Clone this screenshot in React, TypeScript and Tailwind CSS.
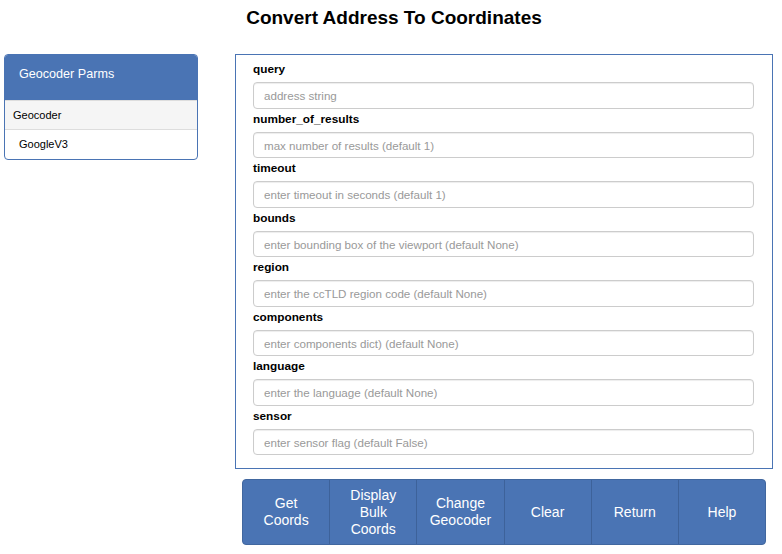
import React from 'react';

const fields: { name: string; placeholder: string }[] = [
  { name: 'query', placeholder: 'address string' },
  { name: 'number_of_results', placeholder: 'max number of results (default 1)' },
  { name: 'timeout', placeholder: 'enter timeout in seconds (default 1)' },
  { name: 'bounds', placeholder: 'enter bounding box of the viewport (default None)' },
  { name: 'region', placeholder: 'enter the ccTLD region code (default None)' },
  { name: 'components', placeholder: 'enter components dict) (default None)' },
  { name: 'language', placeholder: 'enter the language (default None)' },
  { name: 'sensor', placeholder: 'enter sensor flag (default False)' },
];

const buttons: string[][] = [
  ['Get', 'Coords'],
  ['Display', 'Bulk', 'Coords'],
  ['Change', 'Geocoder'],
  ['Clear'],
  ['Return'],
  ['Help'],
];

function GeocoderPanel() {
  return (
    <div className="ml-[4px] w-[194px] h-[106px] border border-[#4a74b4] rounded-[4px] overflow-hidden">
      <div className="h-[45px] bg-[#4a74b4] pl-[14px] pt-[10px] text-white text-[12.6px] leading-[18px]">
        Geocoder Parms
      </div>
      <div className="h-[30px] bg-[#f5f5f5] border-y border-[#dddddd] pl-[8px] text-[11px] leading-[28px] text-black">
        Geocoder
      </div>
      <div className="h-[29px] pl-[14px] text-[11px] leading-[28px] text-black">GoogleV3</div>
    </div>
  );
}

function ParmField({ name, placeholder }: { name: string; placeholder: string }) {
  return (
    <div className="h-[49.5px]">
      <label className="block h-[20px] text-[11.8px] leading-[20px] font-bold text-black">{name}</label>
      <input
        type="text"
        placeholder={placeholder}
        className="mt-[3px] block w-full h-[26.5px] px-[10px] pt-[1px] border border-[#cccccc] rounded-[4px] bg-white text-[11.6px] text-black placeholder:text-[#999999] shadow-[inset_0_1px_1px_rgba(0,0,0,0.075)] outline-none"
      />
    </div>
  );
}

export default function App() {
  return (
    <div className="w-[782px] h-[554px] bg-white font-['Liberation_Sans',Arial,sans-serif] overflow-hidden">
      <h1 className="pt-[6px] h-[54px] text-center text-[19px] leading-[24px] font-bold text-black pl-[6px]">
        Convert Address To Coordinates
      </h1>
      <div className="flex">
        <GeocoderPanel />
        <div className="ml-[37px] w-[538px]">
          <div className="h-[415px] border border-[#4a74b4] pt-[4px] pl-[17px] pr-[18px]">
            {fields.map((f) => (
              <ParmField key={f.name} name={f.name} placeholder={f.placeholder} />
            ))}
          </div>
          <div className="mt-[10px] mx-[7px] h-[66px] flex rounded-[4px] overflow-hidden bg-[#4a74b4] border border-[#41679f]">
            {buttons.map((lines, i) => (
              <button
                key={i}
                className={`flex-1 flex flex-col items-center justify-center text-white text-[14px] leading-[17px] ${
                  i > 0 ? 'border-l border-[#3d629a]' : ''
                }`}
              >
                {lines.map((l) => (
                  <span key={l}>{l}</span>
                ))}
              </button>
            ))}
          </div>
        </div>
      </div>
    </div>
  );
}
